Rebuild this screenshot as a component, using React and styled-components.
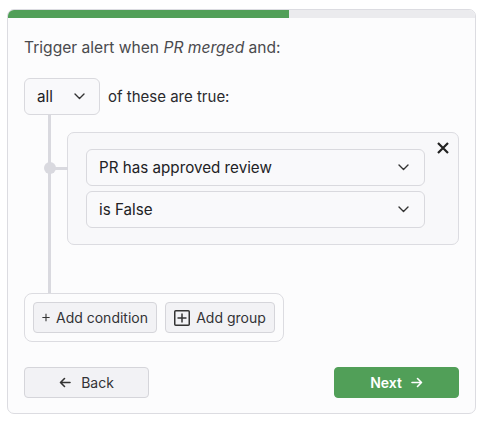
import React from 'react'
import styled, { createGlobalStyle } from 'styled-components'

const Global = createGlobalStyle`
  body {
    margin: 0;
    background: #ffffff;
    font-family: Inter, "Noto Sans", sans-serif;
  }
  * { box-sizing: border-box; }
`;

const Card = styled.div`
  margin: 9px 0 0 7px;
  width: 469px;
  height: 405px;
  background: #fcfcfd;
  border: 1px solid #dcdce1;
  border-radius: 7px;
  overflow: hidden;
  display: flex;
  flex-direction: column;
`;

const Progress = styled.div`
  height: 8px;
  background: #ebebee;
  flex-shrink: 0;
`;

const ProgressFill = styled.div`
  height: 100%;
  background: #519f58;
`;

const Body = styled.div`
  padding: 20px 16px 16px 16px;
  display: flex;
  flex-direction: column;
`;

const Title = styled.p`
  margin: 0;
  font-size: 15.6px;
  line-height: 20px;
  color: #4a4a4d;
  em { font-style: italic; }
`;

const QuantRow = styled.div`
  margin-top: 20px;
  display: flex;
  align-items: center;
  gap: 8px;
  font-size: 15px;
  color: #2a2a2d;
`;

const Select = styled.div`
  height: 37px;
  flex-shrink: 0;
  width: ${p => p.$width || 'auto'};
  display: flex;
  align-items: center;
  justify-content: space-between;
  padding: 0 ${p => p.$padRight || 15}px 0 12px;
  background: #f9f9fb;
  border: 1px solid #d9d9de;
  border-radius: 6px;
  font-size: 15.2px;
  color: #222225;
  white-space: nowrap;
`;

const Tree = styled.div`
  margin-left: 24px;
  border-left: 3px solid #d9d9df;
  padding: 17px 0 48px 16px;
`;

const Group = styled.div`
  position: relative;
  width: 392px;
  padding: 16px 33px 16px 18px;
  background: #f8f8fa;
  border: 1px solid #dcdce1;
  border-radius: 7px;
  display: flex;
  flex-direction: column;
  gap: 5px;
`;

const Connector = styled.div`
  position: absolute;
  left: -17px;
  top: 34px;
  width: 17px;
  height: 3px;
  background: #d9d9df;
`;

const Dot = styled.div`
  position: absolute;
  left: -24px;
  top: 29px;
  width: 12px;
  height: 12px;
  border-radius: 50%;
  background: #d9d9df;
`;

const CloseButton = styled.button`
  position: absolute;
  top: 7px;
  right: 7px;
  width: 16px;
  height: 16px;
  padding: 0;
  border: none;
  background: transparent;
  display: flex;
  align-items: center;
  justify-content: center;
`;

const AddBox = styled.div`
  align-self: flex-start;
  display: flex;
  gap: 8px;
  padding: 8px;
  border: 1px solid #dcdce1;
  border-radius: 8px;
`;

const Button = styled.button`
  height: 31px;
  flex-shrink: 0;
  display: flex;
  align-items: center;
  justify-content: center;
  gap: ${p => p.$gap || 6}px;
  padding: 0 ${p => p.$pad || 8}px;
  width: ${p => p.$width || 'auto'};
  font-family: Inter, "Noto Sans", sans-serif;
  font-size: 14px;
  white-space: nowrap;
  color: ${p => (p.$primary ? '#ffffff' : '#333336')};
  font-weight: ${p => (p.$primary ? 600 : 400)};
  background: ${p => (p.$primary ? '#519f58' : '#f2f2f5')};
  border: 1px solid ${p => (p.$primary ? '#519f58' : '#d5d5da')};
  border-radius: 4px;
`;

const Footer = styled.div`
  margin-top: 25px;
  display: flex;
  justify-content: space-between;
`;

const Chevron = () => (
  <svg width="11" height="7" viewBox="0 0 11 7" fill="none">
    <path d="M1 1l4.5 4.5L10 1" stroke="#333" strokeWidth="1.4" strokeLinecap="round" strokeLinejoin="round" />
  </svg>
);

const Plus = () => (
  <svg width="11" height="11" viewBox="0 0 11 11">
    <path d="M5.5 0.5v10M0.5 5.5h10" stroke="#333" strokeWidth="1.5" />
  </svg>
);

const BoxPlus = () => (
  <svg width="16" height="16" viewBox="0 0 16 16" fill="none">
    <rect x="0.75" y="0.75" width="14.5" height="14.5" rx="1" stroke="#333" strokeWidth="1.5" />
    <path d="M8 3.5v9M3.5 8h9" stroke="#333" strokeWidth="1.5" />
  </svg>
);

const Cross = () => (
  <svg width="12" height="12" viewBox="0 0 12 12">
    <path d="M1 1l10 10M11 1L1 11" stroke="#222" strokeWidth="2.2" />
  </svg>
);

const Arrow = ({ dir, color }) => (
  <svg width="12" height="11" viewBox="0 0 12 11" fill="none">
    {dir === 'left' ? (
      <path d="M11 5.5H1.5M5.5 1.5L1.5 5.5 5.5 9.5" stroke={color} strokeWidth="1.6" strokeLinecap="round" strokeLinejoin="round" />
    ) : (
      <path d="M1 5.5h9.5M6.5 1.5l4 4-4 4" stroke={color} strokeWidth="1.6" strokeLinecap="round" strokeLinejoin="round" />
    )}
  </svg>
);

const App = () => {
  const conditions = ['PR has approved review', 'is False']

  return (
    <>
      <Global />
      <Card>
        <Progress>
          <ProgressFill style={{ width: `${(282 / 469) * 100}%` }} />
        </Progress>
        <Body>
          <Title>Trigger alert when <em>PR merged</em> and:</Title>
          <QuantRow>
            <Select $width="76px" $padRight={14}>all <Chevron /></Select>
            of these are true:
          </QuantRow>
          <Tree>
            <Group>
              <Dot />
              <Connector />
              {conditions.map(c => (
                <Select key={c}>{c} <Chevron /></Select>
              ))}
              <CloseButton><Cross /></CloseButton>
            </Group>
          </Tree>
          <AddBox>
            <Button $width="124px"><Plus />Add condition</Button>
            <Button $width="110px"><BoxPlus />Add group</Button>
          </AddBox>
          <Footer>
            <Button $width="125px" $gap={10}><Arrow dir="left" color="#333" />Back</Button>
            <Button $width="125px" $gap={9} $primary>Next<Arrow dir="right" color="#fff" /></Button>
          </Footer>
        </Body>
      </Card>
    </>
  )
}

export default App
